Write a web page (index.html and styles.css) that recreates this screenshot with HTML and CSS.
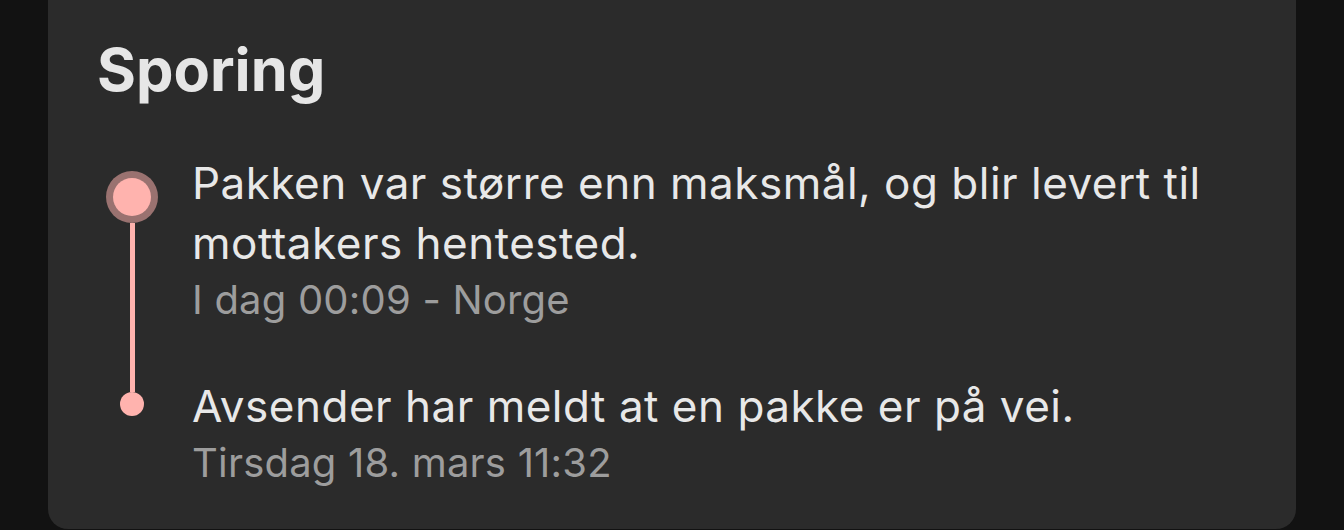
FILE: index.html
```html
<!DOCTYPE html>
<html lang="no">
<head>
<meta charset="utf-8">
<title>Sporing</title>
<link rel="stylesheet" href="styles.css">
</head>
<body>
<main class="page">
  <section class="card">
    <h2 class="card-title">Sporing</h2>
    <ol class="timeline">
      <li class="event event-first">
        <div class="rail">
          <span class="ring"><span class="dot-inner"></span></span>
          <span class="line line-grow"></span>
        </div>
        <div class="event-text">
          <p class="event-title">Pakken var større enn maksmål, og blir levert til mottakers hentested.</p>
          <p class="event-meta">I dag 00:09 - Norge</p>
        </div>
      </li>
      <li class="event event-last">
        <div class="rail">
          <span class="line line-top"></span>
          <span class="dot"></span>
        </div>
        <div class="event-text">
          <p class="event-title">Avsender har meldt at en pakke er på vei.</p>
          <p class="event-meta">Tirsdag 18. mars 11:32</p>
        </div>
      </li>
    </ol>
  </section>
</main>
</body>
</html>
```

FILE: styles.css
```css
* { box-sizing: border-box; }
html, body {
  margin: 0;
  padding: 0;
  background: #121212;
  height: 530px;
  overflow: hidden;
}
body {
  font-family: Inter, "Noto Sans", "DejaVu Sans", sans-serif;
  -webkit-font-smoothing: antialiased;
}
.page {
  padding: 0 48px;
}
.card {
  background: #2b2b2b;
  border-radius: 0 0 20px 20px;
  height: 529px;
  padding: 34px 48px 0 57px;
}
.card-title {
  margin: 0 0 49px -8px;
  font-size: 59.5px;
  line-height: 70px;
  font-weight: 700;
  color: #e6e6e6;
  letter-spacing: 0;
}
.timeline {
  list-style: none;
  margin: 0;
  padding: 0;
  display: flex;
  flex-direction: column;
}
.event {
  display: grid;
  grid-template-columns: 54px 1fr;
  column-gap: 33px;
}
.event-first .event-text {
  padding-bottom: 50px;
}
.rail {
  display: flex;
  flex-direction: column;
  align-items: center;
}
.ring {
  margin-top: 18px;
  width: 52px;
  height: 52px;
  border-radius: 50%;
  background: #9a7270;
  display: flex;
  align-items: center;
  justify-content: center;
  flex: none;
}
.dot-inner {
  width: 38px;
  height: 38px;
  border-radius: 50%;
  background: #ffb3ae;
}
.line {
  width: 5px;
  background: #ffb3ae;
}
.line-grow {
  flex: 1;
}
.line-top {
  height: 16px;
  flex: none;
}
.dot {
  width: 24px;
  height: 24px;
  border-radius: 50%;
  background: #ffb3ae;
  flex: none;
}
.event-text p {
  margin: 0;
}
.event-title {
  font-size: 44px;
  line-height: 60px;
  color: #e8e8e8;
  font-weight: 400;
  letter-spacing: 0.5px;
}
.event-meta {
  font-size: 40px;
  line-height: 53px;
  color: #9d9d9d;
  font-weight: 400;
  letter-spacing: 0.2px;
}
```
